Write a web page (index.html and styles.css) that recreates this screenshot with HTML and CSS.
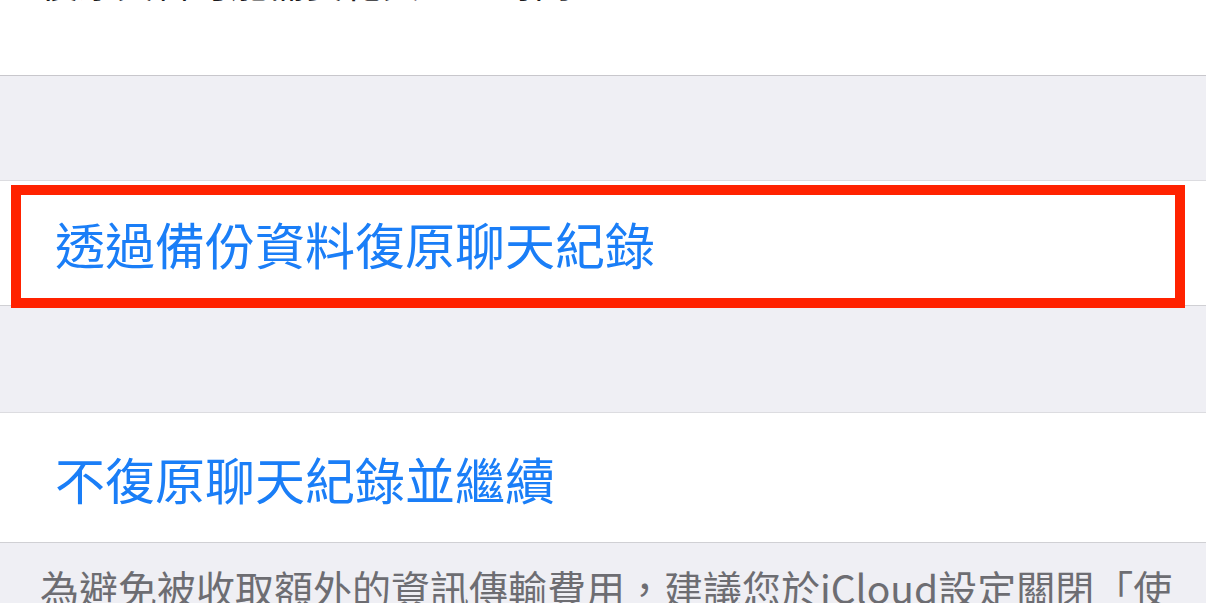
FILE: index.html
```html
<!DOCTYPE html>
<html lang="zh-Hant">
<head>
    <meta charset="UTF-8">
    <meta name="viewport" content="width=device-width, initial-scale=1.0">
    <title>復原聊天紀錄</title>
    <link rel="stylesheet" href="styles.css">
</head>
<body>

    <!-- 上方說明（被截掉的部分） -->
    <div class="cell top-cell">
        <p class="top-text">復原資料可能需要花費一些時間。</p>
    </div>

    <div class="spacer spacer-first"></div>

    <div class="cell action-cell restore-cell">
        <span class="action">透過備份資料復原聊天紀錄</span>
        <div class="highlight"></div>
    </div>

    <div class="spacer spacer-second"></div>

    <div class="cell action-cell">
        <span class="action">不復原聊天紀錄並繼續</span>
    </div>

    <p class="footnote">為避免被收取額外的資訊傳輸費用，建議您於iCloud設定關閉「使用行動數據」。</p>

</body>
</html>
```

FILE: styles.css
```css
body {
    font-family: "Noto Sans CJK TC", "Noto Sans", sans-serif;
    background-color: #efeff4;
    margin: 0;
    overflow: hidden;
}

.cell {
    background-color: #fff;
}

.top-cell {
    height: 75px;
    border-bottom: 1px solid #c8c7cc;
    overflow: hidden;
}

.top-text {
    margin: -46px 0 0 40px;
    font-size: 38px;
    line-height: 54px;
    color: #1c1c1e;
    white-space: nowrap;
}

.spacer-first {
    height: 104px;
}

.spacer-second {
    height: 106px;
}

.action-cell {
    display: flex;
    align-items: center;
    padding-left: 55px;
    border-top: 1px solid #dcdce0;
    border-bottom: 1px solid #d0d0d4;
}

.restore-cell {
    position: relative;
    height: 124px;
}

.action-cell:last-of-type {
    height: 129px;
}

.action {
    font-size: 50px;
    line-height: 60px;
    color: #1a7ef7;
    white-space: nowrap;
}

/* 紅色標註框 */
.highlight {
    position: absolute;
    left: 11px;
    top: 4px;
    width: 1154px;
    height: 103px;
    border: 10px solid #ff2200;
}

.footnote {
    margin: 0;
    padding: 17px 0 0 40px;
    font-size: 39px;
    line-height: 54px;
    color: #6d6d72;
}
```
